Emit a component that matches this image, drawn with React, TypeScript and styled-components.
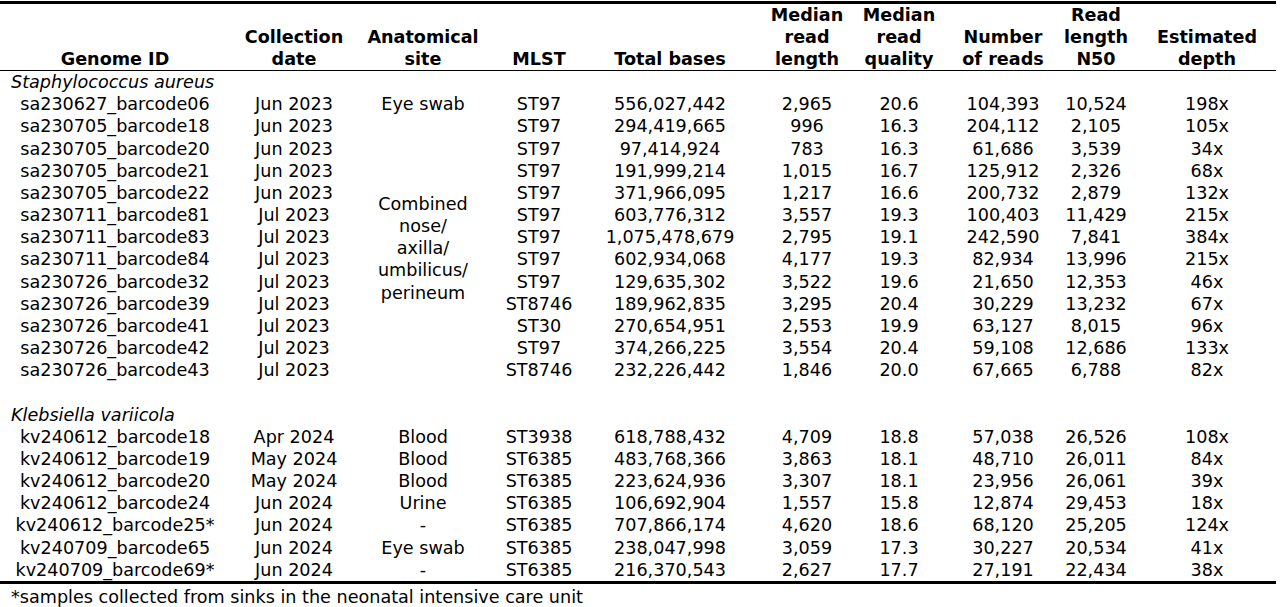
import React from 'react'
import styled, { createGlobalStyle } from 'styled-components'

const GlobalStyle = createGlobalStyle`
  html, body {
    margin: 0;
    padding: 0;
    background: #fff;
  }
  body {
    font-family: Verdana, "DejaVu Sans", sans-serif;
    color: #000;
  }
`

// column widths, plus a small left/right pad where the text sits off-centre
const cols = [
  { w: 230, pl: 0, pr: 0 },
  { w: 128, pl: 0, pr: 0 },
  { w: 130, pl: 0, pr: 0 },
  { w: 102, pl: 0, pr: 0 },
  { w: 160, pl: 0, pr: 0 },
  { w: 110, pl: 4, pr: 0 },
  { w: 85, pl: 0, pr: 7 },
  { w: 110, pl: 6, pr: 0 },
  { w: 85, pl: 0, pr: 3 },
  { w: 136, pl: 0, pr: 2 },
]

const headers = [
  ['Genome ID'],
  ['Collection', 'date'],
  ['Anatomical', 'site'],
  ['MLST'],
  ['Total bases'],
  ['Median', 'read', 'length'],
  ['Median', 'read', 'quality'],
  ['Number', 'of reads'],
  ['Read', 'length', 'N50'],
  ['Estimated', 'depth'],
]

// site column is left out for the rows under the merged cell
const staph: (string | null)[][] = [
  ['sa230627_barcode06', 'Jun 2023', 'Eye swab', 'ST97', '556,027,442', '2,965', '20.6', '104,393', '10,524', '198x'],
  ['sa230705_barcode18', 'Jun 2023', null, 'ST97', '294,419,665', '996', '16.3', '204,112', '2,105', '105x'],
  ['sa230705_barcode20', 'Jun 2023', null, 'ST97', '97,414,924', '783', '16.3', '61,686', '3,539', '34x'],
  ['sa230705_barcode21', 'Jun 2023', null, 'ST97', '191,999,214', '1,015', '16.7', '125,912', '2,326', '68x'],
  ['sa230705_barcode22', 'Jun 2023', null, 'ST97', '371,966,095', '1,217', '16.6', '200,732', '2,879', '132x'],
  ['sa230711_barcode81', 'Jul 2023', null, 'ST97', '603,776,312', '3,557', '19.3', '100,403', '11,429', '215x'],
  ['sa230711_barcode83', 'Jul 2023', null, 'ST97', '1,075,478,679', '2,795', '19.1', '242,590', '7,841', '384x'],
  ['sa230711_barcode84', 'Jul 2023', null, 'ST97', '602,934,068', '4,177', '19.3', '82,934', '13,996', '215x'],
  ['sa230726_barcode32', 'Jul 2023', null, 'ST97', '129,635,302', '3,522', '19.6', '21,650', '12,353', '46x'],
  ['sa230726_barcode39', 'Jul 2023', null, 'ST8746', '189,962,835', '3,295', '20.4', '30,229', '13,232', '67x'],
  ['sa230726_barcode41', 'Jul 2023', null, 'ST30', '270,654,951', '2,553', '19.9', '63,127', '8,015', '96x'],
  ['sa230726_barcode42', 'Jul 2023', null, 'ST97', '374,266,225', '3,554', '20.4', '59,108', '12,686', '133x'],
  ['sa230726_barcode43', 'Jul 2023', null, 'ST8746', '232,226,442', '1,846', '20.0', '67,665', '6,788', '82x'],
]

const kleb: string[][] = [
  ['kv240612_barcode18', 'Apr 2024', 'Blood', 'ST3938', '618,788,432', '4,709', '18.8', '57,038', '26,526', '108x'],
  ['kv240612_barcode19', 'May 2024', 'Blood', 'ST6385', '483,768,366', '3,863', '18.1', '48,710', '26,011', '84x'],
  ['kv240612_barcode20', 'May 2024', 'Blood', 'ST6385', '223,624,936', '3,307', '18.1', '23,956', '26,061', '39x'],
  ['kv240612_barcode24', 'Jun 2024', 'Urine', 'ST6385', '106,692,904', '1,557', '15.8', '12,874', '29,453', '18x'],
  ['kv240612_barcode25*', 'Jun 2024', '-', 'ST6385', '707,866,174', '4,620', '18.6', '68,120', '25,205', '124x'],
  ['kv240709_barcode65', 'Jun 2024', 'Eye swab', 'ST6385', '238,047,998', '3,059', '17.3', '30,227', '20,534', '41x'],
  ['kv240709_barcode69*', 'Jun 2024', '-', 'ST6385', '216,370,543', '2,627', '17.7', '27,191', '22,434', '38x'],
]

function DataRow({ cells, merged }: { cells: (string | null)[]; merged?: boolean }) {
  return (
    <tr>
      {cells.map((c, i) => {
        if (c === null) return null
        return (
          <Cell key={i} $pl={cols[i].pl} $pr={cols[i].pr}>
            {c}
          </Cell>
        )
      })}
      {merged && null}
    </tr>
  )
}

export default function App() {
  return (
    <>
      <GlobalStyle />
      <Page>
        <Table>
          <colgroup>
            {cols.map((c, i) => (
              <col key={i} style={{ width: c.w }} />
            ))}
          </colgroup>
          <thead>
            <tr>
              {headers.map((h, i) => (
                <HeadCell key={i} $pl={cols[i].pl} $pr={cols[i].pr}>
                  {h.map((line, j) => (
                    <React.Fragment key={j}>
                      {j > 0 && <br />}
                      {line}
                    </React.Fragment>
                  ))}
                </HeadCell>
              ))}
            </tr>
          </thead>
          <tbody>
            <tr>
              <Species colSpan={10}>Staphylococcus aureus</Species>
            </tr>
            {staph.map((row, r) => (
              <tr key={r}>
                {row.map((c, i) => {
                  if (i === 2 && r === 1) {
                    return (
                      <Cell key={i} rowSpan={12} $pl={0} $pr={0}>
                        Combined
                        <br />
                        nose/
                        <br />
                        axilla/
                        <br />
                        umbilicus/
                        <br />
                        perineum
                      </Cell>
                    )
                  }
                  if (c === null) return null
                  return (
                    <Cell key={i} $pl={cols[i].pl} $pr={cols[i].pr}>
                      {c}
                    </Cell>
                  )
                })}
              </tr>
            ))}
            <tr>
              <Species colSpan={10}>&nbsp;</Species>
            </tr>
            <tr>
              <Species colSpan={10}>Klebsiella variicola</Species>
            </tr>
            {kleb.map((row, r) => (
              <DataRow key={r} cells={row} />
            ))}
          </tbody>
        </Table>
        <Footnote>*samples collected from sinks in the neonatal intensive care unit</Footnote>
      </Page>
    </>
  )
}

const Page = styled.div`
  width: 1280px;
  height: 607px;
  padding-top: 1px;
  box-sizing: border-box;
  overflow: hidden;
`

const Table = styled.table`
  width: 1276px;
  table-layout: fixed;
  border-collapse: collapse;
  border-top: 3px solid #000;
  border-bottom: 3px solid #000;
  font-size: 17.6px;
`

const HeadCell = styled.th<{ $pl: number; $pr: number }>`
  padding: 0 ${(p) => p.$pr}px 0 ${(p) => p.$pl}px;
  height: 66px;
  line-height: 22px;
  font-weight: bold;
  text-align: center;
  vertical-align: bottom;
  white-space: nowrap;
  border-bottom: 1px solid #000;
`

const Cell = styled.td<{ $pl: number; $pr: number }>`
  padding: 0 ${(p) => p.$pr}px 0 ${(p) => p.$pl}px;
  line-height: 22.17px;
  text-align: center;
  vertical-align: middle;
  white-space: nowrap;
`

const Species = styled.td`
  padding: 0 0 0 11px;
  line-height: 22.17px;
  font-style: italic;
  text-align: left;
  white-space: nowrap;
`

const Footnote = styled.div`
  padding: 2px 0 0 11px;
  font-size: 17.6px;
  line-height: 22px;
`
